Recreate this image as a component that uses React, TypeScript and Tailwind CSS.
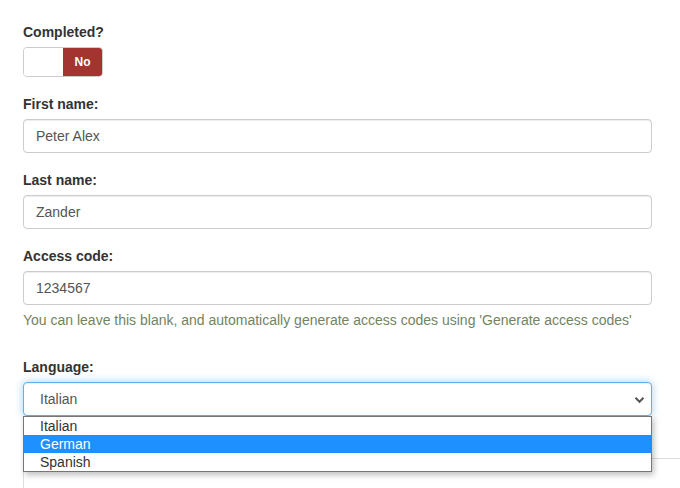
import React from 'react';

const labelCls = 'block h-5 text-[14px] leading-5 font-bold text-[#333] mb-[5px]';
const inputCls =
  'block w-full h-[34px] px-3 text-[14px] text-[#555] bg-white border border-[#ccc] rounded-[4px] shadow-[inset_0_1px_1px_rgba(0,0,0,0.075)] outline-none';

const Field = ({ label, value }: { label: string; value: string }) => (
  <div className="mt-[17px]">
    <label className={labelCls}>{label}</label>
    <input className={inputCls} defaultValue={value} readOnly />
  </div>
);

const App: React.FC = () => {
  const options = ['Italian', 'German', 'Spanish'];
  return (
    <div
      className="w-[680px] h-[488px] overflow-hidden bg-white pl-[23px] pr-[28px] pt-[22px]"
      style={{ fontFamily: '"Liberation Sans", Arial, sans-serif' }}
    >
      <div>
        <label className={labelCls}>Completed?</label>
        <div className="flex w-20 h-[30px] rounded-[4px] overflow-hidden border border-[#ccc]">
          <div className="w-10 bg-white" />
          <div className="w-10 bg-[#a3342f] flex items-center justify-center text-white text-[12px] font-bold">
            No
          </div>
        </div>
      </div>

      <Field label="First name:" value="Peter Alex" />
      <Field label="Last name:" value="Zander" />
      <Field label="Access code:" value="1234567" />
      <p className="mt-[5px] h-5 text-[14px] leading-5 text-[#71845f] whitespace-nowrap">
        You can leave this blank, and automatically generate access codes using 'Generate access codes'
      </p>

      <div className="mt-[27px] relative">
        <label className={labelCls}>Language:</label>
        <div className="relative h-[34px] w-full bg-white border border-[#66afe9] rounded-[4px] shadow-[inset_0_1px_1px_rgba(0,0,0,0.075),0_0_8px_rgba(102,175,233,0.6)] flex items-center pl-4 text-[14px] text-[#555]">
          Italian
          <svg
            className="absolute right-[6px] top-[13px]"
            width="11"
            height="8"
            viewBox="0 0 11 8"
            fill="none"
          >
            <path d="M1.5 1.8L5.5 5.8L9.5 1.8" stroke="#555" strokeWidth="2" />
          </svg>
        </div>

        {/* open native dropdown list */}
        <div className="absolute z-10 left-0 right-0 top-[59px] bg-white border border-[#767676] shadow-[2px_3px_6px_rgba(0,0,0,0.25)]">
          {options.map((o) => (
            <div
              key={o}
              className={
                'h-[18px] leading-[18px] pl-4 text-[14px] ' +
                (o === 'German' ? 'bg-[#1e90ff] text-white' : 'text-[#333]')
              }
            >
              {o}
            </div>
          ))}
        </div>

        <div className="mt-[42px] w-[720px] h-[60px] border-t border-l border-[#ddd]" />
      </div>
    </div>
  );
};

export default App;
